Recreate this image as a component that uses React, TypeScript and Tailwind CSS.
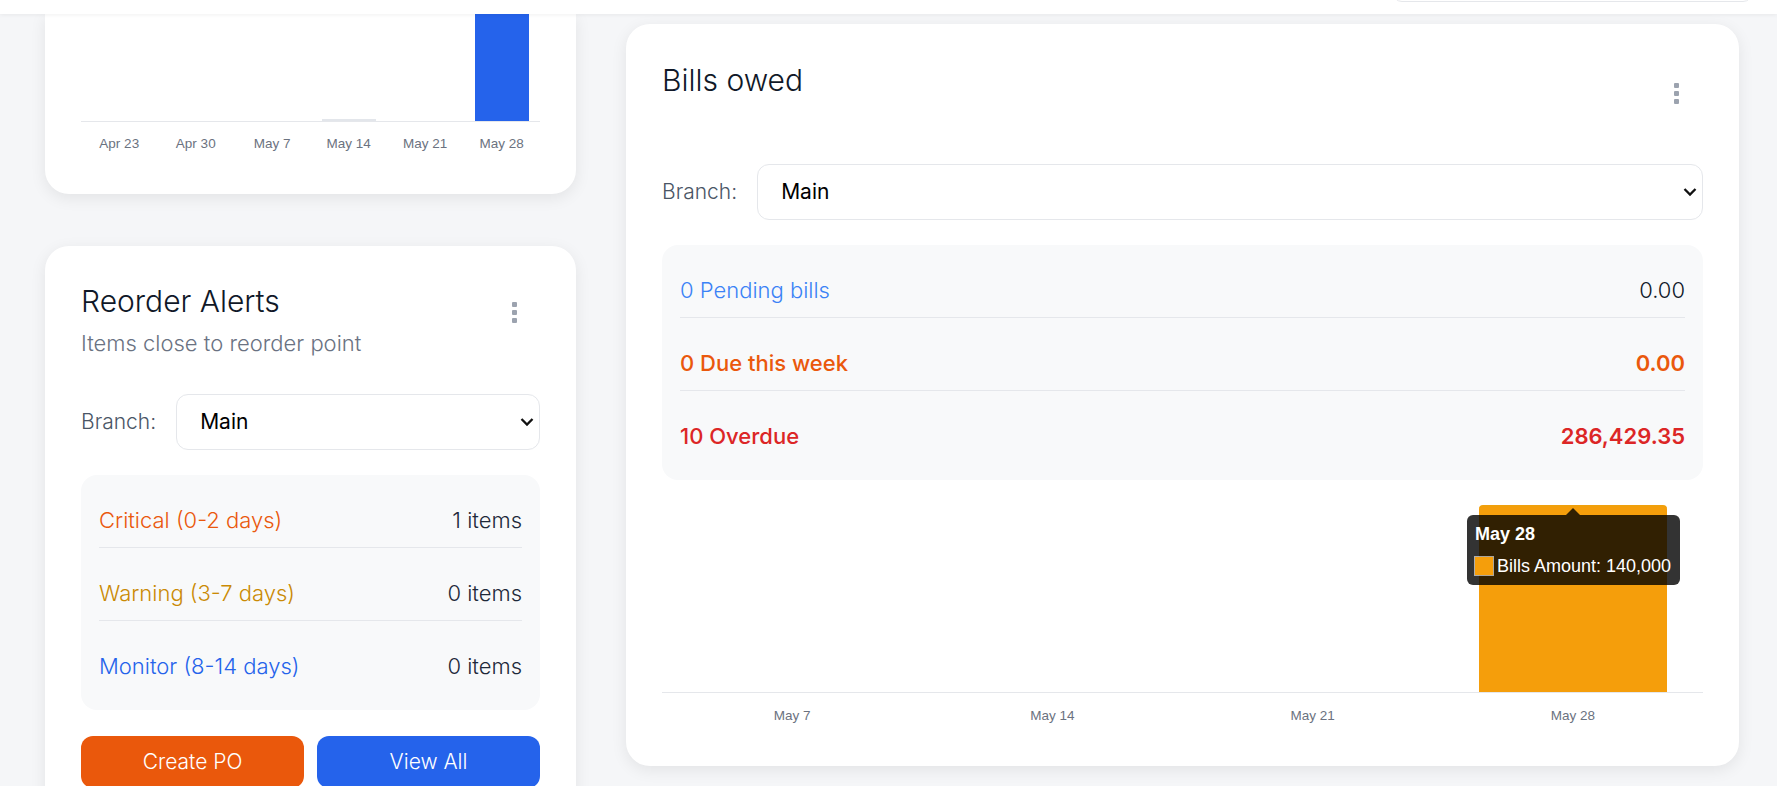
import { FC } from 'react';

const weekly = [
  { label: 'Apr 23', value: 0 },
  { label: 'Apr 30', value: 0 },
  { label: 'May 7', value: 0 },
  { label: 'May 14', value: 1.5 },
  { label: 'May 21', value: 0 },
  { label: 'May 28', value: 100 },
];

const bills = [
  { label: 'May 7', value: 0 },
  { label: 'May 14', value: 0 },
  { label: 'May 21', value: 0 },
  { label: 'May 28', value: 140000 },
];

const Kebab: FC = () => (
  <div className="flex flex-col gap-[3px]">
    <span className="h-[5px] w-[5px] rounded-[1px] bg-[#9ca3af]" />
    <span className="h-[5px] w-[5px] rounded-[1px] bg-[#9ca3af]" />
    <span className="h-[5px] w-[5px] rounded-[1px] bg-[#9ca3af]" />
  </div>
);

const BranchSelect: FC = () => (
  <div className="flex items-center gap-5">
    <span className="text-[21px] font-light text-gray-600">Branch:</span>
    <div className="relative flex-1">
      <select className="h-[56px] w-full appearance-none rounded-xl border border-[#e5e7eb] bg-white pl-[23px] text-[21px] text-black outline-none">
        <option>Main</option>
      </select>
      <svg
        className="pointer-events-none absolute right-[6px] top-1/2 -translate-y-1/2"
        width="14"
        height="9"
        viewBox="0 0 14 9"
        fill="none"
      >
        <path d="M1.5 1.5L7 7L12.5 1.5" stroke="#111" strokeWidth="2.3" />
      </svg>
    </div>
  </div>
);

const Row: FC<{ left: string; right: string; lc: string; rc: string; last?: boolean }> = ({
  left,
  right,
  lc,
  rc,
  last,
}) => (
  <div
    className={`flex items-center justify-between pb-[11px] pt-[29px] text-[22px] leading-[32px] ${
      last ? '' : 'border-b border-[#e5e7eb]'
    }`}
  >
    <span className={lc}>{left}</span>
    <span className={rc}>{right}</span>
  </div>
);

const App: FC = () => (
  <div className="h-[786px] w-full overflow-hidden bg-[#f5f6f8] font-['Inter','Noto_Sans',sans-serif]">
    {/* top bar, mostly scrolled away */}
    <header className="relative z-10 flex h-[14px] items-end justify-end overflow-hidden bg-white pr-[24px] shadow-[0_1px_4px_rgba(0,0,0,0.06)]">
      <div className="mb-[12px] h-[36px] w-[361px] shrink-0 rounded-[10px] border border-[#e5e7eb] bg-white" />
    </header>

    <div className="flex gap-[50px] pl-[45px] pr-[38px]">
      {/* left column */}
      <div className="flex w-[531px] shrink-0 flex-col gap-[52px]">
        <div className="rounded-b-3xl bg-white px-[36px] pb-[40px] shadow-[0_4px_16px_rgba(0,0,0,0.08)]">
          <div className="grid h-[107px] grid-cols-6 items-end">
            {weekly.map((w) => (
              <div key={w.label} className="flex h-full items-end justify-center">
                {w.value > 0 && (
                  <div
                    className={`w-[70.5%] ${w.value < 5 ? 'bg-[#e3e6eb]' : 'bg-[#2563eb]'}`}
                    style={{ height: `${Math.max(w.value, 1.5)}%` }}
                  />
                )}
              </div>
            ))}
          </div>
          <div className="h-px bg-[#e5e7eb]" />
          <div className="mt-[12px] grid grid-cols-6 font-['Liberation_Sans',Arial,sans-serif] text-[13.5px] leading-[20px] text-[#6b7280]">
            {weekly.map((w) => (
              <span key={w.label} className="text-center">
                {w.label}
              </span>
            ))}
          </div>
        </div>

        <div className="rounded-3xl bg-white px-[36px] pt-[37px] shadow-[0_4px_16px_rgba(0,0,0,0.08)]">
          <div className="flex justify-between">
            <div>
              <h2 className="text-[30px] font-light leading-[36px] text-gray-900">Reorder Alerts</h2>
              <p className="mt-[10px] text-[22px] font-light leading-[28px] text-gray-500">
                Items close to reorder point
              </p>
            </div>
            <div className="mr-[23px] mt-[19px]">
              <Kebab />
            </div>
          </div>

          <div className="mt-[37px]">
            <BranchSelect />
          </div>

          <div className="mt-[25px] rounded-2xl bg-[#f8f9fa] px-[18px] pb-[17px]">
            <Row left="Critical (0-2 days)" right="1 items" lc="font-light text-[#ea580c]" rc="font-light text-gray-800" />
            <Row left="Warning (3-7 days)" right="0 items" lc="font-light text-[#ca8a04]" rc="font-light text-gray-800" />
            <Row left="Monitor (8-14 days)" right="0 items" lc="font-light text-[#2563eb]" rc="font-light text-gray-800" last />
          </div>

          <div className="mt-[26px] grid grid-cols-2 gap-[13px] pb-[30px]">
            <button className="h-[52px] rounded-xl bg-[#ea580c] text-[21px] font-light text-white">Create PO</button>
            <button className="h-[52px] rounded-xl bg-[#2563eb] text-[21px] font-light text-white">View All</button>
          </div>
        </div>
      </div>

      {/* right column */}
      <div className="flex-1 pt-[10px]">
        <div className="rounded-3xl bg-white px-[36px] pb-[40px] pt-[38px] shadow-[0_4px_16px_rgba(0,0,0,0.08)]">
          <div className="flex items-start justify-between">
            <h2 className="text-[30px] font-light leading-[36px] text-gray-900">Bills owed</h2>
            <div className="mr-[24px] mt-[21px]">
              <Kebab />
            </div>
          </div>

          <div className="mt-[60px]">
            <BranchSelect />
          </div>

          <div className="mt-[25px] rounded-2xl bg-[#f8f9fa] px-[18px] pb-[17px]">
            <Row left="0 Pending bills" right="0.00" lc="font-light text-[#3b82f6]" rc="font-light text-gray-900" />
            <Row left="0 Due this week" right="0.00" lc="font-medium text-[#ea580c]" rc="font-semibold text-[#ea580c]" />
            <Row left="10 Overdue" right="286,429.35" lc="font-medium text-[#dc2626]" rc="font-semibold text-[#dc2626]" last />
          </div>

          <div className="relative mt-[25px] grid h-[187px] grid-cols-4 items-end">
            {bills.map((b) => (
              <div key={b.label} className="flex h-full items-end justify-center">
                {b.value > 0 && (
                  <div
                    className="w-[72%] rounded-t-[4px] border-t-2 border-[#f0a00c] bg-[#f59e0b]"
                    style={{ height: `${(b.value / 140000) * 100}%` }}
                  />
                )}
              </div>
            ))}

            {/* tooltip */}
            <div className="absolute left-[805px] top-[10px] h-[70px] w-[213px] rounded-md bg-black/80 px-[8px] pt-[8px] font-['Liberation_Sans',Arial,sans-serif] text-white">
              <span className="absolute -top-[7px] left-[99px] h-0 w-0 border-x-[7px] border-b-[7px] border-x-transparent border-b-black/80" />
              <div className="text-[18px] font-bold leading-[22px]">May 28</div>
              <div className="mt-[10px] flex items-center gap-[4px] text-[18px] leading-[22px]">
                <span className="h-[18px] w-[18px] shrink-0 border-2 border-[#f59e0b] bg-[#f59e0b] outline outline-1 outline-white/60" />
                <span>Bills Amount: 140,000</span>
              </div>
            </div>
          </div>
          <div className="h-px bg-[#e5e7eb]" />
          <div className="mt-[13px] grid grid-cols-4 font-['Liberation_Sans',Arial,sans-serif] text-[13.5px] leading-[20px] text-[#6b7280]">
            {bills.map((b) => (
              <span key={b.label} className="text-center">
                {b.label}
              </span>
            ))}
          </div>
        </div>
      </div>
    </div>
  </div>
);

export default App;
